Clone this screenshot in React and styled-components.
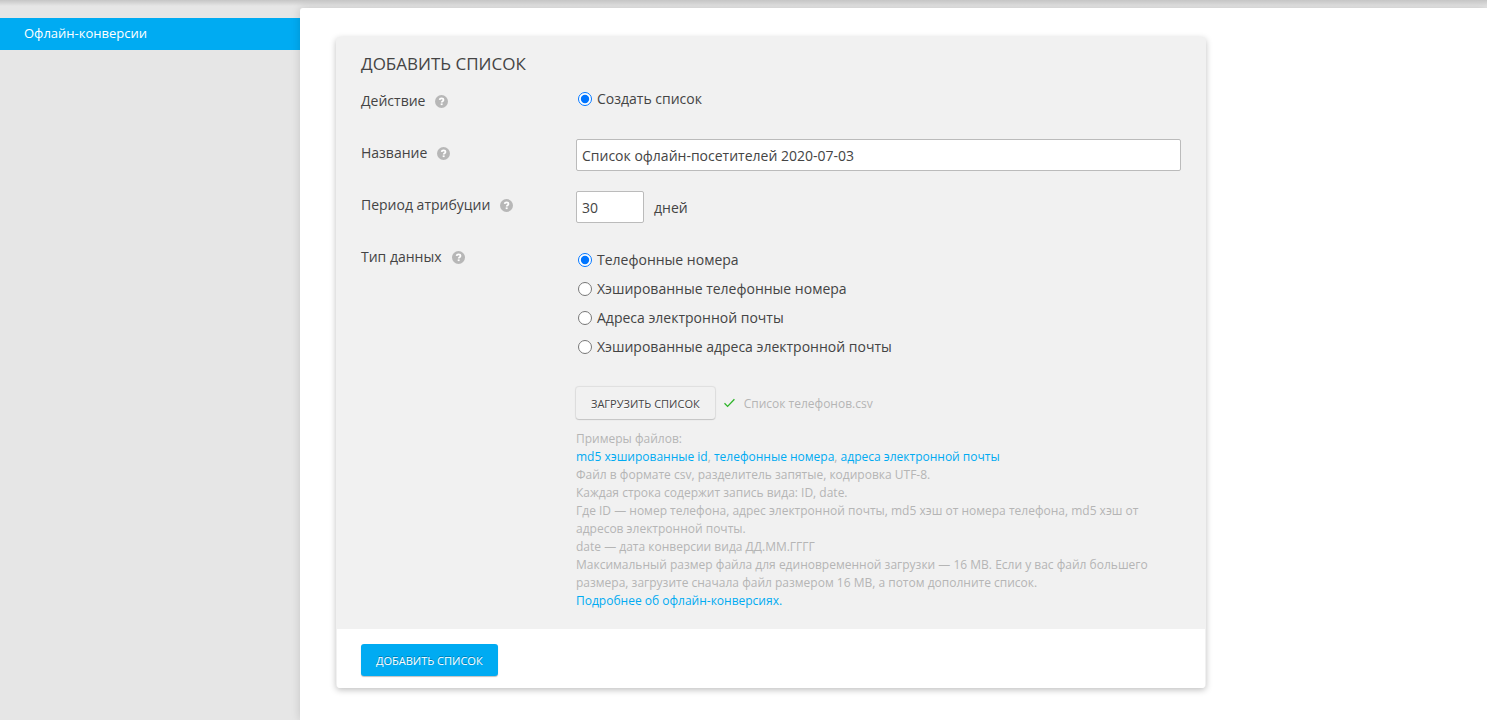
import React, { useState } from 'react';
import styled, { createGlobalStyle } from 'styled-components';

const primaryColor = '#00abf2';
const textColor = '#444444';
const mutedColor = '#b5b5b5';
const panelColor = '#f1f1f1';

const GlobalStyle = createGlobalStyle`
    * {
        box-sizing: border-box;
    }
    body {
        margin: 0;
        background: #e6e6e6;
        color: ${textColor};
        font-family: "Open Sans", "Noto Sans", sans-serif;
        font-size: 14px;
        font-weight: 400;
    }
    button, input {
        font: inherit;
        color: inherit;
    }
`;

const Page = styled.div`
    display: grid;
    grid-template-columns: 300px 1fr;
    min-height: 100vh;
    background: linear-gradient(rgba(0, 0, 0, 0.14), rgba(0, 0, 0, 0) 6px);
`;

const Sidebar = styled.nav`
    padding-top: 18px;
`;

const SidebarLink = styled.a`
    display: block;
    height: 32px;
    padding: 0 24px;
    background: ${primaryColor};
    color: #ffffff;
    font-size: 13px;
    font-weight: 500;
    line-height: 30px;
    text-decoration: none;
`;

const Content = styled.main`
    margin-top: 8px;
    padding: 29px 36px 32px;
    background: #ffffff;
    border-radius: 3px 0 0 0;
    box-shadow: 0 0 10px rgba(0, 0, 0, 0.15);
`;

const Panel = styled.form`
    max-width: 870px;
    border-radius: 4px;
    background: ${panelColor};
    box-shadow: 0 2px 6px rgba(0, 0, 0, 0.25);
`;

const PanelBody = styled.div`
    padding: 15px 25px 19px;
`;

const Title = styled.h1`
    margin: 0 0 11px;
    font-size: 17px;
    font-weight: 400;
    line-height: 24px;
    text-transform: uppercase;
`;

const Rows = styled.div`
    display: grid;
    gap: 20px;
`;

const Row = styled.div`
    display: grid;
    grid-template-columns: 215px 1fr;
    align-items: start;
    min-height: 32px;
`;

const RowLabel = styled.div`
    display: flex;
    align-items: center;
    gap: 10px;
    line-height: 28px;
`;

const HelpButton = styled.button`
    display: flex;
    padding: 0;
    border: none;
    background: transparent;
    cursor: pointer;
`;

const Field = styled.div`
    display: flex;
    align-items: center;
    gap: 10px;
`;

const TextInput = styled.input`
    width: ${(props) => (props.$short ? '68px' : '100%')};
    height: 32px;
    padding: 0 5px;
    border: 1px solid #bbbbbb;
    border-radius: 2px;
    background: #ffffff;
`;

const Options = styled.div`
    display: grid;
    gap: 5px;
    padding-top: ${(props) => (props.$list ? '5px' : '0')};
`;

const Option = styled.label`
    display: flex;
    align-items: center;
    gap: 5px;
    line-height: 24px;
`;

const Radio = styled.input`
    width: 14px;
    height: 14px;
    margin: 0 0 0 2px;
`;

const Upload = styled.div`
    display: flex;
    align-items: center;
    gap: 8px;
    margin: 28px 0 11px;
`;

const Button = styled.button`
    height: 32px;
    padding: 0 15px;
    border: none;
    border-radius: 3px;
    background: ${(props) => (props.$primary ? primaryColor : panelColor)};
    box-shadow: ${(props) => (props.$primary ? '0 1px 1px rgba(0, 0, 0, 0.25)' : '0 0 1px 1px rgba(0, 0, 0, 0.08), 0 1px 1px rgba(0, 0, 0, 0.12)')};
    color: ${(props) => (props.$primary ? '#ffffff' : textColor)};
    font-size: 11px;
    font-weight: ${(props) => (props.$primary ? 500 : 400)};
    text-shadow: ${(props) => (props.$primary ? '0 -1px 0 rgba(0, 0, 0, 0.3)' : '0 1px 0 #ffffff')};
    text-transform: uppercase;
    cursor: pointer;
`;

const FileName = styled.span`
    color: ${mutedColor};
    font-size: 12px;
    font-weight: 400;
`;

const Hint = styled.div`
    color: ${mutedColor};
    font-size: 12px;
    font-weight: 400;
    line-height: 18px;
`;

const HintLine = styled.p`
    margin: 0;
`;

const HintLink = styled.a`
    color: ${primaryColor};
    text-decoration: none;
`;

const PanelFooter = styled.div`
    margin: 0 1px;
    padding: 15px 24px 12px;
    border-radius: 0 0 3px 3px;
    background: #ffffff;
`;

const dataTypes = [
    { value: 'phone', text: 'Телефонные номера' },
    { value: 'phone-hash', text: 'Хэшированные телефонные номера' },
    { value: 'email', text: 'Адреса электронной почты' },
    { value: 'email-hash', text: 'Хэшированные адреса электронной почты' },
];

const Help = () => (
    <HelpButton type="button" aria-label="Справка">
        <svg width="13" height="13" viewBox="0 0 13 13">
            <circle cx="6.5" cy="6.5" r="6.5" fill="#b7b7b7" />
            <path d="M4.6 4.9C4.7 3.8 5.4 3.3 6.5 3.3c1.2 0 2 .6 2 1.6 0 1.4-1.8 1.3-1.8 2.7" fill="none" stroke="#fff" strokeWidth="1.7" />
            <rect x="5.7" y="8.4" width="1.9" height="1.7" fill="#fff" />
        </svg>
    </HelpButton>
);

const Check = () => (
    <svg width="13" height="10" viewBox="0 0 13 10">
        <path d="M1.5 5.2 4.6 8.4 11.4 1.2" fill="none" stroke="#2fb52a" strokeWidth="1.3" />
    </svg>
);

export default function App() {
    const [name, setName] = useState('Список офлайн-посетителей 2020-07-03');
    const [days, setDays] = useState('30');
    const [dataType, setDataType] = useState('phone');

    return (
        <Page>
            <GlobalStyle />
            <Sidebar>
                <SidebarLink href="#offline">Офлайн-конверсии</SidebarLink>
            </Sidebar>
            <Content>
                <Panel onSubmit={(e) => e.preventDefault()}>
                    <PanelBody>
                        <Title>Добавить список</Title>
                        <Rows>
                            <Row>
                                <RowLabel><span id="action">Действие</span><Help /></RowLabel>
                                <Options role="radiogroup" aria-labelledby="action">
                                    <Option>
                                        <Radio type="radio" name="action" defaultChecked />
                                        Создать список
                                    </Option>
                                </Options>
                            </Row>
                            <Row>
                                <RowLabel><label htmlFor="name">Название</label><Help /></RowLabel>
                                <Field>
                                    <TextInput id="name" value={name} onChange={(e) => setName(e.target.value)} />
                                </Field>
                            </Row>
                            <Row>
                                <RowLabel><label htmlFor="days">Период атрибуции</label><Help /></RowLabel>
                                <Field>
                                    <TextInput $short id="days" value={days} onChange={(e) => setDays(e.target.value)} />
                                    дней
                                </Field>
                            </Row>
                            <Row>
                                <RowLabel><span id="type">Тип данных</span><Help /></RowLabel>
                                <div>
                                    <Options $list role="radiogroup" aria-labelledby="type">
                                        {dataTypes.map((item) => (
                                            <Option key={item.value}>
                                                <Radio
                                                    type="radio"
                                                    name="type"
                                                    checked={dataType === item.value}
                                                    onChange={() => setDataType(item.value)}
                                                />
                                                {item.text}
                                            </Option>
                                        ))}
                                    </Options>
                                    <Upload>
                                        <Button type="button">Загрузить список</Button>
                                        <Check />
                                        <FileName>Список телефонов.csv</FileName>
                                    </Upload>
                                    <Hint>
                                        <HintLine>Примеры файлов:</HintLine>
                                        <HintLine>
                                            <HintLink href="#md5">md5 хэшированные id</HintLink>,{' '}
                                            <HintLink href="#phones">телефонные номера</HintLink>,{' '}
                                            <HintLink href="#emails">адреса электронной почты</HintLink>
                                        </HintLine>
                                        <HintLine>Файл в формате csv, разделитель запятые, кодировка UTF-8.</HintLine>
                                        <HintLine>Каждая строка содержит запись вида: ID, date.</HintLine>
                                        <HintLine>Где ID — номер телефона, адрес электронной почты, md5 хэш от номера телефона, md5 хэш от адресов электронной почты.</HintLine>
                                        <HintLine>date — дата конверсии вида ДД.ММ.ГГГГ</HintLine>
                                        <HintLine>Максимальный размер файла для единовременной загрузки — 16 MB. Если у вас файл большего размера, загрузите сначала файл размером 16 MB, а потом дополните список.</HintLine>
                                        <HintLine><HintLink href="#more">Подробнее об офлайн-конверсиях.</HintLink></HintLine>
                                    </Hint>
                                </div>
                            </Row>
                        </Rows>
                    </PanelBody>
                    <PanelFooter>
                        <Button $primary type="submit">Добавить список</Button>
                    </PanelFooter>
                </Panel>
            </Content>
        </Page>
    );
}
